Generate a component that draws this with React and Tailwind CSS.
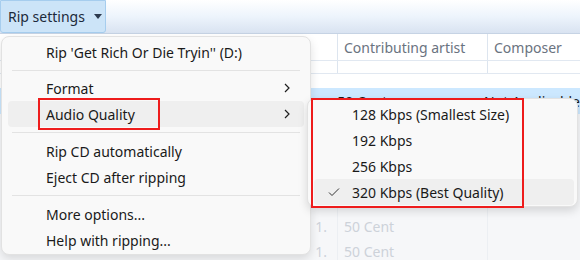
import React from "react";

const font = { fontFamily: '"Noto Sans", "Open Sans", sans-serif' };

function Chevron() {
  return (
    <svg width="8" height="12" viewBox="0 0 8 12" className="ml-auto">
      <path d="M2 2l4 4-4 4" fill="none" stroke="#1f1f1f" strokeWidth="1.2" />
    </svg>
  );
}

function Check() {
  return (
    <svg width="12" height="10" viewBox="0 0 12 10">
      <path d="M1 5.5l3 3L11 1.5" fill="none" stroke="#333" strokeWidth="1" />
    </svg>
  );
}

function MenuItem({ children, arrow, active }) {
  return (
    <div
      className={
        "mx-[6px] h-[26px] flex items-center pl-[38px] pr-[13px] rounded-[4px] text-[#1a1a1a] whitespace-nowrap " +
        (active ? "bg-[#efefef]" : "")
      }
    >
      <span>{children}</span>
      {arrow && <Chevron />}
    </div>
  );
}

function Separator({ h }) {
  return (
    <div className={"flex items-center px-[10px] " + h}>
      <div className="h-px w-full bg-[#e3e3e3]" />
    </div>
  );
}

const qualities = [
  "128 Kbps (Smallest Size)",
  "192 Kbps",
  "256 Kbps",
  "320 Kbps (Best Quality)",
];

export default function App() {
  return (
    <div
      className="relative w-[580px] h-[260px] overflow-hidden bg-[#f6f7f9] text-[14px]"
      style={font}
    >
      {/* toolbar */}
      <div className="h-[34px] flex border-b border-[#c6d3e4] bg-gradient-to-b from-white via-[#edf4fc] to-[#d9e3f1]">
        <button className="h-[33px] w-[106px] flex items-center pl-[7px] gap-[9px] bg-[#cce4f8] border border-[#a6cdee] rounded-b-[3px] text-[#1c2a3b] whitespace-nowrap">
          <span>Rip settings</span>
          <svg width="8" height="5" viewBox="0 0 8 5">
            <path d="M0 0h8L4 5z" fill="#2c3a4e" />
          </svg>
        </button>
      </div>

      {/* table */}
      <div className="bg-white">
        <div className="h-[27px] flex border-b border-[#e1e8f1] text-[#6a7380] whitespace-nowrap">
          <div className="w-[338px] border-r border-[#dde5ef]" />
          <div className="w-[150px] pl-[6px] flex items-center border-r border-[#dde5ef]">
            Contributing artist
          </div>
          <div className="flex-1 pl-[6px] flex items-center">Composer</div>
        </div>
        <div className="h-[13px] flex border-b border-[#e1e8f1]">
          <div className="w-[338px] border-r border-[#dde5ef]" />
          <div className="w-[150px] border-r border-[#dde5ef]" />
        </div>
        <div className="h-[14px]" />
      </div>
      <div className="h-[26px] flex items-center bg-[#cce8ff] text-[#1a1a1a] whitespace-nowrap">
        <div className="w-[338px] text-right pr-[18px]">1.</div>
        <div className="w-[150px] pl-[6px]">50 Cent</div>
        <div className="pl-[6px]">Not Applicable</div>
      </div>
      {[0, 1, 2, 3, 4, 5].map((i) => (
        <div key={i} className="h-[25px] flex text-[#cdd2d9] whitespace-nowrap">
          <div className="w-[338px] pr-[10px] border-r border-[#eceff3] flex items-center justify-end">
            1.
          </div>
          <div className="w-[150px] pl-[6px] border-r border-[#eceff3] flex items-center">
            50 Cent
          </div>
        </div>
      ))}

      {/* main menu */}
      <div className="absolute left-[1px] top-[36px] w-[310px] pt-[2px] pb-[1px] bg-[#f9f9f9] rounded-[8px] border border-[#e2e2e2] shadow-[0_4px_10px_rgba(0,0,0,0.12)]">
        <MenuItem>Rip 'Get Rich Or Die Tryin'' (D:)</MenuItem>
        <Separator h="h-[10px]" />
        <MenuItem arrow>Format</MenuItem>
        <MenuItem arrow active>
          Audio Quality
        </MenuItem>
        <Separator h="h-[11px]" />
        <MenuItem>Rip CD automatically</MenuItem>
        <MenuItem>Eject CD after ripping</MenuItem>
        <Separator h="h-[11px]" />
        <MenuItem>More options...</MenuItem>
        <MenuItem>Help with ripping...</MenuItem>
      </div>

      {/* submenu */}
      <div className="absolute left-[307px] top-[98px] w-[271px] pt-[2px] pb-[1px] bg-[#f9f9f9] rounded-[8px] border border-[#e2e2e2] shadow-[0_4px_10px_rgba(0,0,0,0.14)]">
        {qualities.map((q, i) => (
          <div
            key={q}
            className={
              "ml-[6px] mr-[3px] h-[26px] flex items-center rounded-[4px] text-[#1a1a1a] whitespace-nowrap " +
              (i === 3 ? "bg-[#efefef]" : "")
            }
          >
            <div className="w-[38px] pl-[14px]">{i === 3 && <Check />}</div>
            <span>{q}</span>
          </div>
        ))}
      </div>

      {/* highlight boxes */}
      <div className="absolute left-[38px] top-[98px] w-[122px] h-[32px] border-[2px] border-[#ee1c1c]" />
      <div className="absolute left-[311px] top-[98px] w-[213px] h-[110px] border-[2px] border-[#ee1c1c]" />
    </div>
  );
}
